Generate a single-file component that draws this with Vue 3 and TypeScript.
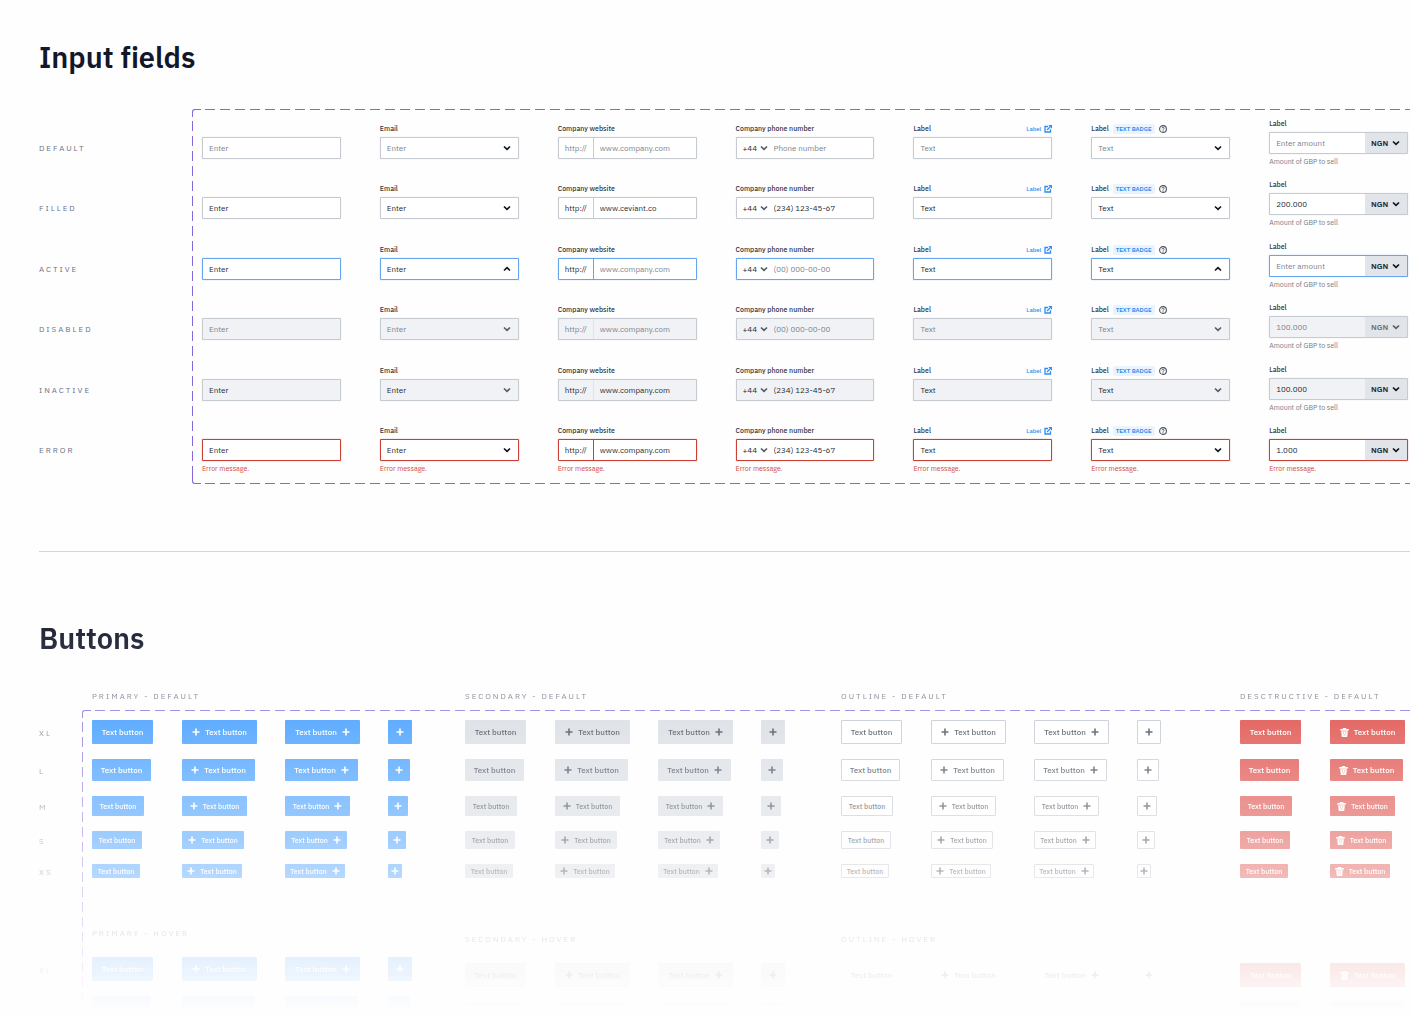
<script setup lang="ts">
type State = 'default' | 'filled' | 'active' | 'disabled' | 'inactive' | 'error'
type Kind = 'plain' | 'select' | 'website' | 'phone' | 'link' | 'tagged' | 'amount'
type Content = 'text' | 'left' | 'right' | 'icon'

interface Column {
  kind: Kind
  label: string
  values: Record<State, string>
  hints: State[]
}

interface Group {
  name: string
  tone: string
  hoverTitle: boolean
  icon: 'plus' | 'trash'
  contents: Content[]
}

const states: State[] = ['default', 'filled', 'active', 'disabled', 'inactive', 'error']

const same = (text: string): Record<State, string> => ({
  default: text,
  filled: text,
  active: text,
  disabled: text,
  inactive: text,
  error: text,
})

const columns: Column[] = [
  { kind: 'plain', label: 'Enter', values: same('Enter'), hints: ['default', 'disabled'] },
  { kind: 'select', label: 'Email', values: same('Enter'), hints: ['default', 'disabled'] },
  {
    kind: 'website',
    label: 'Company website',
    values: { ...same('www.company.com'), filled: 'www.ceviant.co' },
    hints: ['default', 'active', 'disabled'],
  },
  {
    kind: 'phone',
    label: 'Company phone number',
    values: {
      ...same('(234) 123-45-67'),
      default: 'Phone number',
      active: '(00) 000-00-00',
      disabled: '(00) 000-00-00',
    },
    hints: ['default', 'active', 'disabled'],
  },
  { kind: 'link', label: 'Label', values: same('Text'), hints: ['default', 'disabled'] },
  { kind: 'tagged', label: 'Label', values: same('Text'), hints: ['default', 'disabled'] },
  {
    kind: 'amount',
    label: 'Label',
    values: {
      default: 'Enter amount',
      filled: '200.000',
      active: 'Enter amount',
      disabled: '100.000',
      inactive: '100.000',
      error: '1.000',
    },
    hints: ['default', 'active', 'disabled'],
  },
]

const isSelect = (kind: Kind) => kind === 'select' || kind === 'tagged'
const isLocked = (state: State) => state === 'disabled' || state === 'inactive'
const isHint = (column: Column, state: State) => column.hints.includes(state)

const all: Content[] = ['text', 'left', 'right', 'icon']
const groups: Group[] = [
  { name: 'PRIMARY', tone: 'primary', hoverTitle: true, icon: 'plus', contents: all },
  { name: 'SECONDARY', tone: 'secondary', hoverTitle: true, icon: 'plus', contents: all },
  { name: 'OUTLINE', tone: 'outline', hoverTitle: true, icon: 'plus', contents: all },
  { name: 'DESCTRUCTIVE', tone: 'destructive', hoverTitle: false, icon: 'trash', contents: ['text', 'left'] },
]
const sizes = ['xl', 'l', 'm', 's', 'xs']
const sets = [
  { name: 'default', sizes },
  { name: 'hover', sizes: ['xl', 'l'] },
]
</script>

<template>
  <main class="page">
    <svg class="symbols" aria-hidden="true">
      <symbol id="chevron" viewBox="0 0 8 8">
        <path d="M1 2.500 4 5.400 7 2.500" fill="none" stroke="currentColor" stroke-width="1.700" />
      </symbol>
      <symbol id="external" viewBox="0 0 16 16">
        <path d="M8 3H2v11h11V8.500" fill="none" stroke="currentColor" stroke-width="2.600" />
        <path d="M6 10 12 4" fill="none" stroke="currentColor" stroke-width="2.400" />
        <path d="M8.500 0H16v7.500Z" fill="currentColor" />
      </symbol>
      <symbol id="help" viewBox="0 0 16 16">
        <circle cx="8" cy="8" r="6.800" fill="none" stroke="currentColor" stroke-width="2.200" />
        <path d="M5.800 6.600c0-1.300 1-2.100 2.200-2.100s2.200.8 2.200 2c0 1.500-2.100 1.500-2.100 3" fill="none" stroke="currentColor" stroke-width="1.800" />
        <circle cx="8" cy="11.700" r="1.100" fill="currentColor" />
      </symbol>
      <symbol id="plus" viewBox="0 0 16 16">
        <path d="M8 1v14M1 8h14" fill="none" stroke="currentColor" stroke-width="3.200" />
      </symbol>
      <symbol id="trash" viewBox="0 0 16 16">
        <path
          d="M5 0h6v1.800H15.500v3.200H.5v-3.200H5ZM2 5.800h12L12.800 16H3.200ZM5.200 8v1.600h1.400V8Zm4.200 0v1.600h1.400V8ZM6 11.800v1.200h4v-1.200Z"
          fill="currentColor"
          fill-rule="evenodd"
        />
      </symbol>
    </svg>

    <section class="fields">
      <h1>Input fields</h1>
      <div class="fields-body">
        <div class="state-names">
          <span v-for="state in states" :key="state" class="caps">{{ state }}</span>
        </div>
        <div class="frame field-frame">
          <div v-for="column in columns" :key="column.kind" class="column" :class="column.kind">
            <div v-for="state in states" :key="state" class="field" :class="state">
              <div class="label-row">
                <label v-if="column.kind !== 'plain'" :for="`${column.kind}-${state}`">{{ column.label }}</label>
                <a v-if="column.kind === 'link'" class="label-link" href="#">
                  Label
                  <svg><use href="#external" /></svg>
                </a>
                <template v-if="column.kind === 'tagged'">
                  <span class="badge">TEXT BADGE</span>
                  <svg class="help"><use href="#help" /></svg>
                </template>
              </div>
              <div class="box">
                <template v-if="isSelect(column.kind)">
                  <select
                    :id="`${column.kind}-${state}`"
                    :class="{ hint: isHint(column, state) }"
                    :disabled="isLocked(state)"
                  >
                    <option>{{ column.values[state] }}</option>
                  </select>
                  <svg class="chevron" :class="{ up: state === 'active' }"><use href="#chevron" /></svg>
                </template>
                <template v-else>
                  <span v-if="column.kind === 'website'" class="prefix">http://</span>
                  <span v-if="column.kind === 'phone'" class="code">
                    <select aria-label="Country code">
                      <option>+44</option>
                    </select>
                    <svg class="chevron"><use href="#chevron" /></svg>
                  </span>
                  <input
                    :id="`${column.kind}-${state}`"
                    type="text"
                    :aria-label="column.kind === 'plain' ? column.label : undefined"
                    :placeholder="isHint(column, state) ? column.values[state] : undefined"
                    :value="isHint(column, state) ? '' : column.values[state]"
                    :disabled="isLocked(state)"
                  />
                  <span v-if="column.kind === 'amount'" class="currency">
                    <select aria-label="Currency" :disabled="isLocked(state)">
                      <option>NGN</option>
                    </select>
                    <svg class="chevron"><use href="#chevron" /></svg>
                  </span>
                </template>
              </div>
              <div class="note">
                <template v-if="state === 'error'">Error message.</template>
                <template v-else-if="column.kind === 'amount'">Amount of GBP to sell</template>
              </div>
            </div>
          </div>
        </div>
      </div>
    </section>

    <hr />

    <section class="buttons">
      <h2>Buttons</h2>
      <div class="groups group-titles">
        <span v-for="group in groups" :key="group.name" class="caps">{{ group.name }} - DEFAULT</span>
      </div>
      <div class="buttons-body">
        <div class="size-names">
          <div v-for="set in sets" :key="set.name" class="size-set">
            <span v-for="size in set.sizes" :key="size" class="caps size-name" :class="size">{{ size }}</span>
          </div>
        </div>
        <div class="frame groups button-frame">
          <div v-for="group in groups" :key="group.name" :class="group.tone">
            <div v-for="set in sets" :key="set.name" class="set" :class="set.name">
              <div v-if="set.name === 'hover'" class="caps set-title">
                <template v-if="group.hoverTitle">{{ group.name }} - HOVER</template>
              </div>
              <div v-for="size in set.sizes" :key="size" class="button-row">
                <button
                  v-for="content in group.contents"
                  :key="content"
                  type="button"
                  :class="[size, content]"
                  :aria-label="content === 'icon' ? 'Add' : undefined"
                >
                  <svg v-if="content === 'left' || content === 'icon'" :class="group.icon">
                    <use :href="`#${group.icon}`" />
                  </svg>
                  <span v-if="content !== 'icon'">Text button</span>
                  <svg v-if="content === 'right'" :class="group.icon"><use :href="`#${group.icon}`" /></svg>
                </button>
              </div>
            </div>
          </div>
        </div>
      </div>
    </section>
  </main>
</template>

<style>
body {
  background: #fefefe;
  overflow: hidden;
}
</style>

<style scoped>
.page {
  height: 100vh;
  overflow: hidden;
  font-family: "IBM Plex Sans", "Noto Sans", sans-serif;
  font-size: 8px;
  font-variant-ligatures: none;
  color: #232936;
}

.page * {
  box-sizing: border-box;
}

.symbols {
  position: absolute;
  width: 0;
  height: 0;
}

h1,
h2 {
  margin: 0;
  font-size: 29px;
  line-height: 36px;
  font-weight: 600;
  color: #12172a;
}

.caps {
  font-size: 8px;
  line-height: 10px;
  letter-spacing: 2px;
  text-transform: uppercase;
  white-space: nowrap;
  color: #6b727e;
}

.fields {
  padding: 39px 0 67px 39px;
}

.fields-body {
  display: grid;
  grid-template-columns: 153px minmax(0, 1fr);
  margin-top: 34px;
}

.state-names {
  display: flex;
  flex-direction: column;
  justify-content: space-between;
  padding: 34px 0 29px;
}

.frame {
  --dash: #8468dc;
  position: relative;
  background:
    repeating-linear-gradient(90deg, var(--dash) 0 10px, transparent 10px 15px) 13px 0 / 100% 1px no-repeat,
    repeating-linear-gradient(180deg, var(--dash) 0 10px, transparent 10px 15px) 0 12px / 1px calc(100% - 20px) no-repeat;
}

.frame::before {
  content: "";
  position: absolute;
  left: 0;
  top: 0;
  width: 8px;
  height: 7px;
  border: solid var(--dash);
  border-width: 1px 0 0 1px;
  border-top-left-radius: 3px;
}

.field-frame {
  display: grid;
  grid-template-columns: repeat(7, minmax(0, 1fr));
  column-gap: 39px;
  min-height: 375px;
  padding: 10px 2px 9px 10px;
  background:
    repeating-linear-gradient(90deg, var(--dash) 0 10px, transparent 10px 15px) 13px 0 / 100% 1px no-repeat,
    repeating-linear-gradient(90deg, var(--dash) 0 10px, transparent 10px 15px) 13px 100% / 100% 1px no-repeat,
    repeating-linear-gradient(180deg, var(--dash) 0 10px, transparent 10px 15px) 0 12px / 1px calc(100% - 20px) no-repeat;
}

.field-frame::after {
  content: "";
  position: absolute;
  left: 0;
  bottom: 0;
  width: 8px;
  height: 7px;
  border: solid var(--dash);
  border-width: 0 0 1px 1px;
  border-bottom-left-radius: 3px;
}

.column {
  display: flex;
  flex-direction: column;
  justify-content: space-between;
  padding-top: 5px;
}

.column.amount {
  padding-top: 0;
}

.field {
  --line: #c6cad1;
  --fill: #fff;
  --hint: #7b828e;
  --ink: #232936;
}

.field.active {
  --line: #66a6ef;
}

.field.disabled,
.field.inactive {
  --fill: #f0f2f5;
}

.field.error {
  --line: #cb4035;
}

.label-row {
  display: flex;
  align-items: center;
  height: 10px;
  margin-bottom: 3px;
  font-size: 7px;
  line-height: 10px;
  font-weight: 500;
  white-space: nowrap;
  color: #303744;
}

.label-link {
  display: flex;
  align-items: center;
  gap: 3px;
  margin-left: auto;
  font-size: 6px;
  color: #2f8cf0;
  text-decoration: none;
}

.label-link svg,
.help {
  width: 8px;
  height: 8px;
}

.badge {
  margin: 0 4px;
  padding: 0 3px;
  border-radius: 2px;
  background: #e9f4ff;
  font-size: 6px;
  font-weight: 600;
  color: #2f8cf0;
}

.help {
  color: #4a505c;
}

.box {
  position: relative;
  display: flex;
  height: 22px;
  border: 1px solid var(--line);
  border-radius: 1px;
  background: var(--fill);
  box-shadow: 0 0 1px var(--line);
}

input,
select {
  appearance: none;
  flex: 1;
  min-width: 0;
  height: 20px;
  margin: 0;
  padding: 0 6px;
  border: 0;
  outline: 0;
  background: none;
  font: inherit;
  font-size: 8px;
  color: var(--ink);
  opacity: 1;
}

input::placeholder,
select.hint {
  color: var(--hint);
  opacity: 1;
}

.chevron {
  position: absolute;
  right: 7px;
  top: 6px;
  width: 8px;
  height: 8px;
  color: #11151f;
  pointer-events: none;
}

.chevron.up {
  transform: rotate(180deg);
}

.disabled .chevron,
.inactive .chevron,
.code .chevron {
  color: #565d69;
}

.prefix {
  flex: 0 0 35px;
  padding-left: 6px;
  border-right: 1px solid var(--line);
  line-height: 20px;
}

.disabled .prefix,
.inactive .prefix {
  border-color: #e0e3e8;
}

.default .prefix,
.disabled .prefix {
  color: var(--hint);
}

.code {
  position: relative;
  display: flex;
  flex: 0 0 31px;
}

.code .chevron {
  right: 0;
}

.currency {
  position: relative;
  display: flex;
  flex: 0 0 42px;
  background: #e1e4e9;
}

.currency select {
  font-weight: 600;
}

.disabled .currency select {
  color: #6d7480;
}

.inactive .currency .chevron {
  color: #11151f;
}

.note {
  height: 14px;
  padding-top: 3px;
  font-size: 7px;
  line-height: 10px;
  white-space: nowrap;
  color: #747b87;
}

.error .note {
  color: #cf4a40;
}

hr {
  height: 1px;
  margin: 0 0 0 39px;
  border: 0;
  background: #d3d6d9;
}

.buttons {
  padding: 68px 0 0 39px;
  mask-image: linear-gradient(to bottom, #000 50px, transparent 458px);
}

.groups {
  display: grid;
  grid-template-columns: minmax(0, 373fr) minmax(0, 376fr) minmax(0, 399fr) minmax(0, 170fr);
}

.group-titles {
  margin-top: 35px;
  padding-left: 53px;
}

.buttons-body {
  display: grid;
  grid-template-columns: 43px minmax(0, 1fr);
  margin-top: 9px;
}

.button-frame {
  padding: 10px 0 0 10px;
}

.size-names {
  padding-top: 11px;
}

.size-set {
  display: flex;
  flex-direction: column;
  gap: 15px;
}

.size-set + .size-set {
  margin-top: 79px;
}

.size-name.xl {
  line-height: 24px;
}

.size-name.l {
  line-height: 22px;
}

.size-name.m {
  line-height: 20px;
}

.size-name.s {
  line-height: 18px;
}

.size-name.xs {
  line-height: 14px;
}

.set {
  display: flex;
  flex-direction: column;
  gap: 15px;
}

.set.hover {
  margin-top: 56px;
}

.primary .set.hover {
  margin-top: 50px;
}

.set-title {
  height: 10px;
  margin-bottom: 4px;
}

.button-row {
  display: grid;
  grid-template-columns: 90px 103px 103px 24px;
  justify-items: start;
}

button {
  display: flex;
  align-items: center;
  justify-content: center;
  gap: 5px;
  padding: 0;
  border: 1px solid transparent;
  border-radius: 1px;
  font: inherit;
  font-weight: 500;
  white-space: nowrap;
}

button svg {
  width: 8px;
  height: 8px;
}

button svg.trash {
  width: 9px;
  height: 9px;
}

button.xl {
  width: 75px;
  height: 24px;
}

button.l {
  width: 73px;
  height: 22px;
}

button.m {
  width: 65px;
  height: 20px;
  font-size: 7px;
}

button.s {
  width: 62px;
  height: 18px;
  font-size: 7px;
}

button.xs {
  width: 60px;
  height: 14px;
  font-size: 7px;
}

button.text.xl {
  width: 61px;
}

button.text.l {
  width: 59px;
}

button.text.m {
  width: 52px;
}

button.text.s {
  width: 50px;
}

button.text.xs {
  width: 48px;
}

button.icon {
  width: auto;
  aspect-ratio: 1;
}

.primary button {
  background: #1f8bff;
  color: #fff;
}

.secondary button {
  background: #d2d7de;
  color: #29303d;
}

.outline button {
  border-color: #b9bfc9;
  background: #fff;
  color: #29303d;
}

.destructive button {
  background: #d92d27;
  color: #fff;
}

.hover .button-row {
  opacity: 0.9;
}

.outline .hover button {
  border-color: transparent;
}
</style>
